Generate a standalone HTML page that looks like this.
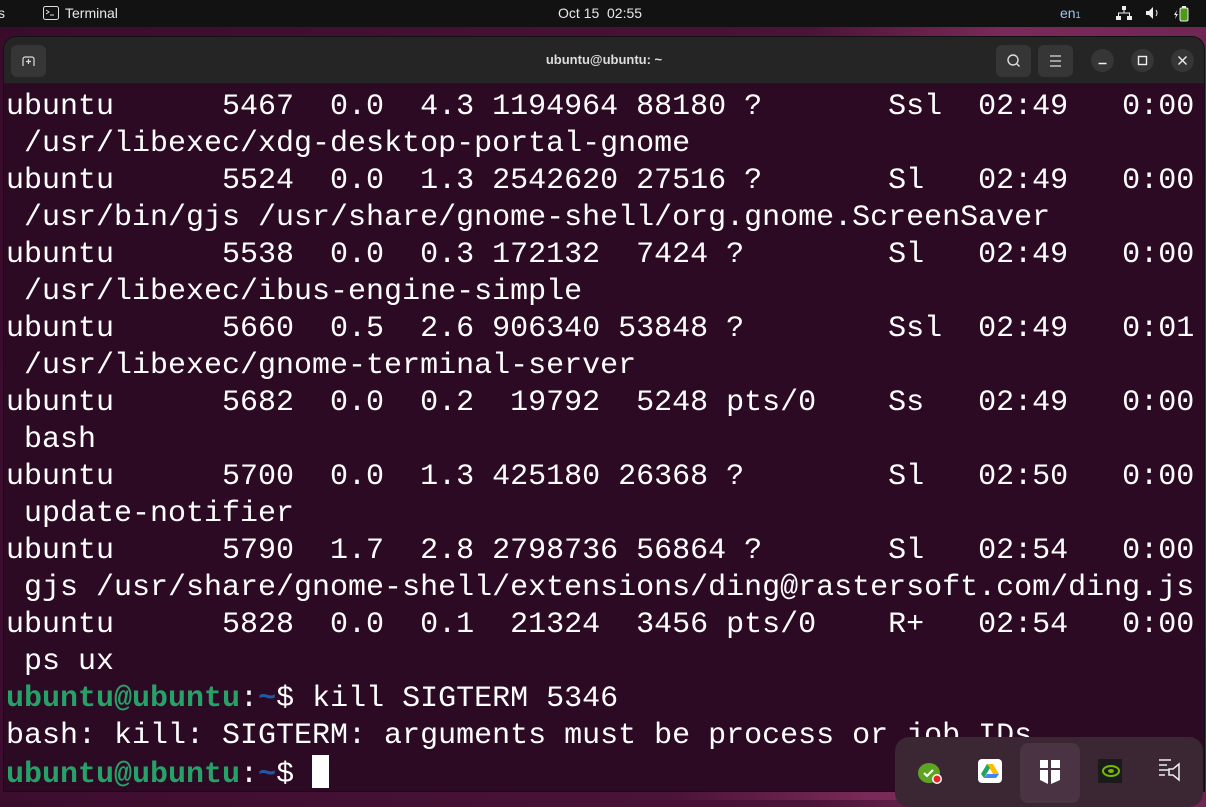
<!DOCTYPE html>
<html><head><meta charset="utf-8"><style>
*{margin:0;padding:0;box-sizing:border-box}
body{width:1206px;height:800px;overflow:hidden;background:linear-gradient(100deg,#3a0c2c 0%,#4a1338 60%,#7a2a58 75%,#6a2350 100%);position:relative;font-family:"Liberation Sans",sans-serif}
#top{position:absolute;left:0;top:0;width:1206px;height:27px;background:#121212;color:#e8e8e8;font-size:14px}
#top span{position:absolute;top:5px}
#win{position:absolute;left:4px;top:37px;width:1200px;height:754px;border-radius:12px 12px 0 0;overflow:hidden;background:#2d0a23;box-shadow:0 0 0 1px #111}
#tb{position:absolute;left:0;top:0;width:100%;height:47px;background:#252525;border-bottom:1px solid #1a1a1a}
.btn{position:absolute;top:8px;width:35px;height:32px;border-radius:6px;background:#363636}
.cb{position:absolute;top:12px;width:23px;height:23px;border-radius:50%;background:#363636}
#title{position:absolute;left:0;width:100%;top:15px;text-align:center;color:#ddd;font-size:13px;font-weight:bold}
pre{position:absolute;left:2px;top:52px;font-family:"Liberation Mono",monospace;font-size:30px;line-height:37px;color:#fff;white-space:pre}
.g{color:#26a269;font-weight:bold}.b{color:#1f5aa8;font-weight:bold}
.cur{display:inline-block;width:17px;height:33px;background:#fff;vertical-align:-6px}
#dock{position:absolute;left:895px;top:737px;width:308px;height:70px;border-radius:14px;background:#3b2634}
</style></head><body>
<div id="top">
<span style="left:-2px">s</span>
<svg style="position:absolute;left:43px;top:6px" width="16" height="14"><rect x="0.5" y="0.5" width="15" height="13" rx="2" fill="none" stroke="#ddd"/><path d="M3 4l3 2-3 2M7 9h4" stroke="#ddd" fill="none"/></svg>
<span style="left:65px">Terminal</span>
<span style="left:558px">Oct 15&nbsp; 02:55</span>
<span style="left:1060px;color:#9cc8f0">en<small style="font-size:9px">1</small></span>
<svg style="position:absolute;left:1116px;top:6px" width="16" height="14"><rect x="6" y="0" width="4" height="4" fill="#eee"/><rect x="0" y="10" width="5" height="4" fill="#eee"/><rect x="11" y="10" width="5" height="4" fill="#eee"/><path d="M8 4v3M2.5 10V7h11v3" stroke="#eee" fill="none"/></svg>
<svg style="position:absolute;left:1145px;top:6px" width="16" height="14"><path d="M1 5h3l4-4v12l-4-4H1z" fill="#eee"/><path d="M11 4q2 3 0 6" stroke="#eee" fill="none"/></svg>
<svg style="position:absolute;left:1173px;top:5px" width="16" height="17"><path d="M4 5l-3 5h2l-1 4 3-5H3z" fill="#eee"/><rect x="7" y="3" width="8" height="13" rx="1.5" fill="#4c9a16" stroke="#eee"/><rect x="9" y="1" width="4" height="2" fill="#eee"/></svg>
</div>
<div id="win">
<div id="tb">
<div class="btn" style="left:7px"><svg width="35" height="32"><path d="M12 21v-7a2 2 0 0 1 2-2h7a2 2 0 0 1 2 2v7M17.5 14v5M15 16.5h5" stroke="#ddd" stroke-width="1.2" fill="none"/></svg></div>
<div id="title">ubuntu@ubuntu: ~</div>
<div class="btn" style="left:992px"><svg width="35" height="32"><circle cx="17" cy="15" r="5" stroke="#ddd" stroke-width="1.4" fill="none"/><path d="M20.5 18.5l3 3" stroke="#ddd" stroke-width="1.4"/></svg></div>
<div class="btn" style="left:1034px"><svg width="35" height="32"><path d="M12 11h11M12 16h11M12 21h11" stroke="#ddd" stroke-width="1.2"/></svg></div>
<div class="cb" style="left:1087px"><svg width="23" height="23"><path d="M7.5 14.5h8" stroke="#eee" stroke-width="1.4"/></svg></div>
<div class="cb" style="left:1127px"><svg width="23" height="23"><rect x="7.5" y="7.5" width="8" height="8" stroke="#eee" stroke-width="1.4" fill="none"/></svg></div>
<div class="cb" style="left:1167px"><svg width="23" height="23"><path d="M7.5 7.5l8 8M15.5 7.5l-8 8" stroke="#eee" stroke-width="1.4"/></svg></div>
</div>
<pre>ubuntu      5467  0.0  4.3 1194964 88180 ?       Ssl  02:49   0:00
 /usr/libexec/xdg-desktop-portal-gnome
ubuntu      5524  0.0  1.3 2542620 27516 ?       Sl   02:49   0:00
 /usr/bin/gjs /usr/share/gnome-shell/org.gnome.ScreenSaver
ubuntu      5538  0.0  0.3 172132  7424 ?        Sl   02:49   0:00
 /usr/libexec/ibus-engine-simple
ubuntu      5660  0.5  2.6 906340 53848 ?        Ssl  02:49   0:01
 /usr/libexec/gnome-terminal-server
ubuntu      5682  0.0  0.2  19792  5248 pts/0    Ss   02:49   0:00
 bash
ubuntu      5700  0.0  1.3 425180 26368 ?        Sl   02:50   0:00
 update-notifier
ubuntu      5790  1.7  2.8 2798736 56864 ?       Sl   02:54   0:00
 gjs /usr/share/gnome-shell/extensions/ding@rastersoft.com/ding.js
ubuntu      5828  0.0  0.1  21324  3456 pts/0    R+   02:54   0:00
 ps ux
<span class="g">ubuntu@ubuntu</span>:<span class="b">~</span>$ kill SIGTERM 5346
bash: kill: SIGTERM: arguments must be process or job IDs
<span class="g">ubuntu@ubuntu</span>:<span class="b">~</span>$ <span class="cur"></span></pre>
</div>
<div id="dock">
<div style="position:absolute;left:125px;top:6px;width:60px;height:60px;border-radius:8px;background:#4a3443"></div>
<svg style="position:absolute;left:22px;top:24px" width="30" height="26"><ellipse cx="12" cy="12" rx="11" ry="10" fill="#5da420"/><path d="M7 12l3 3 6-6" stroke="#fff" stroke-width="2" fill="none"/><circle cx="20" cy="18" r="5" fill="#fff"/><circle cx="20" cy="18" r="3.5" fill="#e22"/></svg>
<div style="position:absolute;left:83px;top:22px;width:24px;height:24px;border-radius:4px;background:#fff"><svg width="24" height="24"><path d="M9 5h6l6 10h-6z" fill="#fbbc04"/><path d="M9 5l-6 10 3 4 6-10z" fill="#1fa463"/><path d="M6 19h12l3-4H9z" fill="#4285f4"/></svg></div>
<svg style="position:absolute;left:145px;top:23px" width="20" height="24"><path d="M0 0h8v8H0zM11 0h9v8h-9zM0 10h8v14l-8-4zM11 10h9v10l-9 4z" fill="#fff"/></svg>
<div style="position:absolute;left:203px;top:22px;width:24px;height:24px;background:#1b1b1b"><svg width="24" height="24"><ellipse cx="13" cy="12" rx="8" ry="5" fill="none" stroke="#76b900" stroke-width="2"/><ellipse cx="13" cy="12" rx="3" ry="2" fill="#76b900"/></svg></div>
<svg style="position:absolute;left:262px;top:21px" width="26" height="26"><path d="M2 2h12M2 7h8M2 12h10M2 17h6" stroke="#eee" stroke-width="1.5"/><path d="M12 11h4l6-5v16l-6-5h-4z" stroke="#eee" stroke-width="1.5" fill="none"/></svg>
</div>
</body></html>
